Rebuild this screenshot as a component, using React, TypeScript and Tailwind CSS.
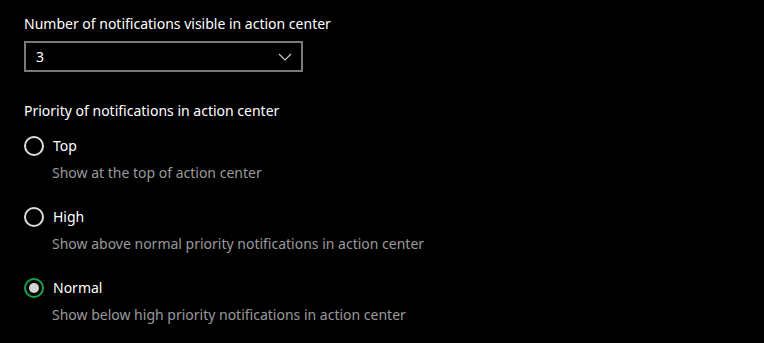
import { useState } from 'react';

const options = [
  { id: 'top', label: 'Top', desc: 'Show at the top of action center' },
  { id: 'high', label: 'High', desc: 'Show above normal priority notifications in action center' },
  { id: 'normal', label: 'Normal', desc: 'Show below high priority notifications in action center' },
];

const App = () => {
  const [priority, setPriority] = useState('normal');

  return (
    <div
      className="min-h-screen w-full bg-black text-white px-6 pt-[13px]"
      style={{ fontFamily: '"Segoe UI", "Noto Sans", sans-serif' }}
    >
      <p className="text-[14px] leading-[22px]">Number of notifications visible in action center</p>
      <div className="mt-[6px] w-[279px] h-[31px] border-2 border-[#7a7a7a] flex items-center justify-between pl-[10px] pr-[8px]">
        <span className="text-[14px]">3</span>
        <svg width="14" height="8" viewBox="0 0 14 8" fill="none" className="mr-[1px]">
          <path d="M1 1l6 6 6-6" stroke="#cfcfcf" strokeWidth="1.1" />
        </svg>
      </div>

      <p className="mt-[28px] text-[14px] leading-[22px]">Priority of notifications in action center</p>
      <div className="flex flex-col gap-[22px] mt-[13px]">
        {options.map((o) => {
          const checked = priority === o.id;
          return (
            <div key={o.id}>
              <button onClick={() => setPriority(o.id)} className="flex items-center gap-[9px]">
                <span
                  className={`w-[20px] h-[20px] rounded-full border-2 flex items-center justify-center ${
                    checked ? 'border-[#16a34a]' : 'border-[#dedede]'
                  }`}
                >
                  {checked && <span className="w-[10px] h-[10px] rounded-full bg-[#d4d4d4]" />}
                </span>
                <span className="text-[14px] leading-[22px]">{o.label}</span>
              </button>
              <p className="mt-[5px] pl-[28px] text-[14px] leading-[22px] text-[#9a9a9a]">{o.desc}</p>
            </div>
          );
        })}
      </div>
    </div>
  );
};

export default App;
